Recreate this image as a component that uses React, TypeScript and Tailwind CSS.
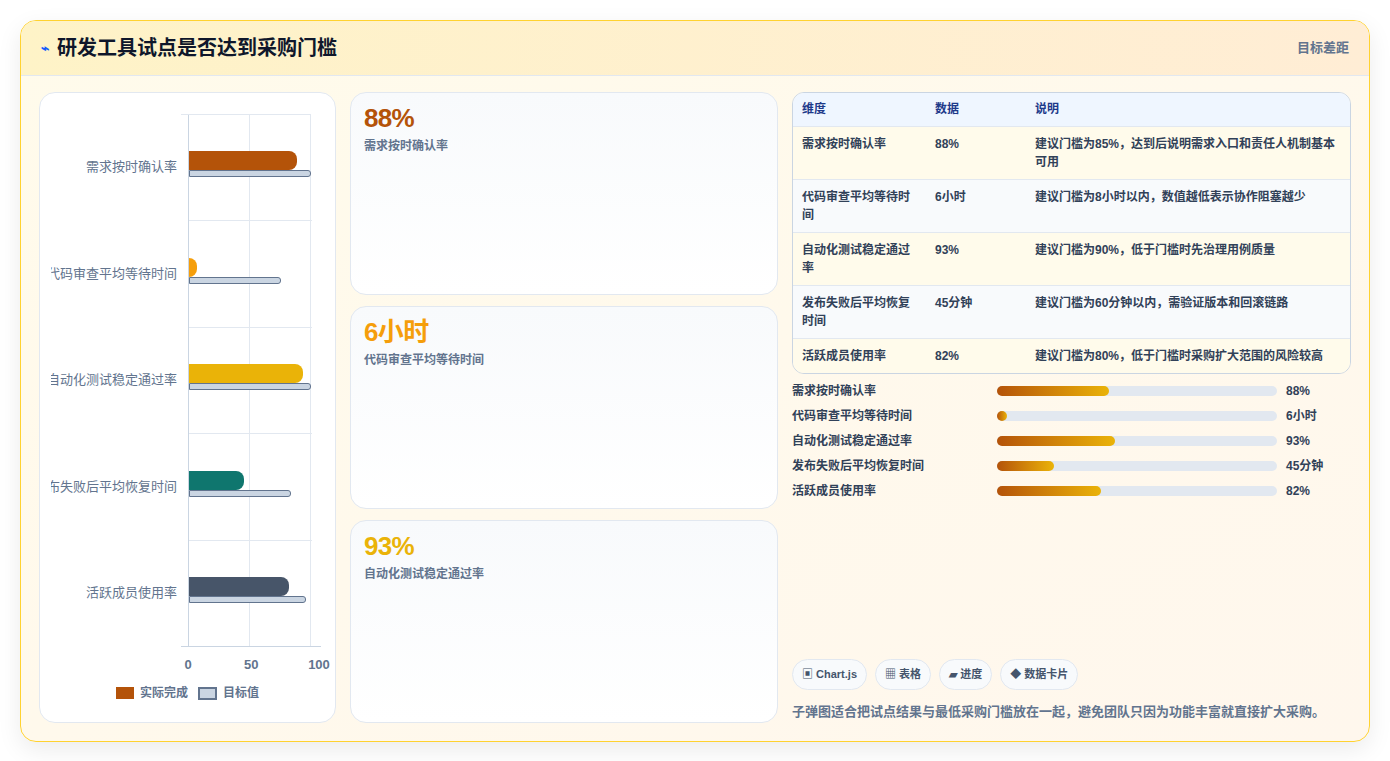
import React from 'react';

const rows = [
  { name: '需求按时确认率', value: '88%', actual: 108, target: 122, color: '#b45309', fill: 112, note: '建议门槛为85%，达到后说明需求入口和责任人机制基本可用' },
  { name: '代码审查平均等待时间', value: '6小时', actual: 8, target: 92, color: '#f59e0b', fill: 10, note: '建议门槛为8小时以内，数值越低表示协作阻塞越少' },
  { name: '自动化测试稳定通过率', value: '93%', actual: 114, target: 122, color: '#eab308', fill: 118, note: '建议门槛为90%，低于门槛时先治理用例质量' },
  { name: '发布失败后平均恢复时间', value: '45分钟', actual: 55, target: 102, color: '#0f766e', fill: 57, note: '建议门槛为60分钟以内，需验证版本和回滚链路' },
  { name: '活跃成员使用率', value: '82%', actual: 100, target: 117, color: '#475569', fill: 104, note: '建议门槛为80%，低于门槛时采购扩大范围的风险较高' },
];

const cards = [
  { value: '88%', label: '需求按时确认率', cls: 'text-[#b45309]' },
  { value: '6小时', label: '代码审查平均等待时间', cls: 'text-[#f59e0b]' },
  { value: '93%', label: '自动化测试稳定通过率', cls: 'text-[#eab308]' },
];

function Chart() {
  return (
    <div className="flex w-[297px] shrink-0 flex-col overflow-hidden rounded-2xl border border-slate-200 bg-white">
      <div className="flex flex-1 pt-[21px]">
        <div className="flex w-[148px] shrink-0 flex-col overflow-hidden pl-[11px]">
          {rows.map((r) => (
            <div key={r.name} className="flex h-[106.4px] items-center justify-end overflow-hidden whitespace-nowrap pr-[11px] text-[13px] text-slate-500">
              <span className="shrink-0">{r.name}</span>
            </div>
          ))}
        </div>
        <div className="relative w-[124px] border-l border-slate-300">
          <div className="pointer-events-none absolute inset-0">
            <div className="absolute left-[60px] top-0 bottom-0 w-px bg-slate-200" />
            <div className="absolute left-[121px] top-0 bottom-0 w-px bg-slate-200" />
            <div className="absolute left-[-8px] right-[2px] top-0 h-px bg-slate-200" />
          </div>
          {rows.map((r, i) => (
            <div key={r.name} className={`relative flex h-[106.4px] flex-col justify-center pb-[6px] ${i > 0 ? 'border-t border-slate-200' : ''}`}>
              <div className="h-[19px] rounded-r-[8px]" style={{ width: r.actual, background: r.color }} />
              <div className="h-[7px] rounded-r-[3px] border-[1.5px] border-slate-500 bg-slate-300" style={{ width: r.target }} />
            </div>
          ))}
        </div>
      </div>
      <div className="ml-[141px] flex w-[140px] justify-between border-t border-slate-300 pt-[8px] text-[13px] font-bold text-slate-500">
        <span className="w-[14px] text-center">0</span>
        <span className="w-[14px] text-center">50</span>
        <span className="-mr-[10px] w-[24px] text-center">100</span>
      </div>
      <div className="mb-[20px] mt-[10px] flex justify-center gap-[10px] text-[12px] font-bold text-slate-500">
        <span className="flex items-center gap-[6px]"><span className="h-[12px] w-[18px] bg-[#b45309]" />实际完成</span>
        <span className="flex items-center gap-[6px]"><span className="h-[13px] w-[19px] border-2 border-slate-500 bg-slate-300" />目标值</span>
      </div>
    </div>
  );
}

export default function App() {
  return (
    <div className="min-h-screen bg-white p-5 font-[Liberation_Sans,Noto_Sans_CJK_SC,sans-serif]">
      <div className="overflow-hidden rounded-2xl border border-amber-300 bg-gradient-to-br from-[#fffbeb] to-[#fff7ed] shadow-[0_8px_24px_rgba(0,0,0,0.08)]">
        <header className="flex h-[55px] items-center justify-between border-b border-slate-200 bg-gradient-to-r from-[#fef3c7] to-[#ffedd5] px-5">
          <h1 className="flex items-center gap-2 text-[20px] font-bold text-slate-900">
            <span className="text-[14px] text-blue-600">⌁</span>研发工具试点是否达到采购门槛
          </h1>
          <span className="text-[13px] font-bold text-slate-500">目标差距</span>
        </header>
        <div className="flex h-[665px] gap-[14px] px-[18px] pt-[16px] pb-[18px]">
          <Chart />
          <div className="flex w-[428px] shrink-0 flex-col gap-[11px]">
            {cards.map((c) => (
              <div key={c.label} className="flex-1 rounded-2xl border border-slate-200 bg-gradient-to-b from-[#f8fafc] to-white px-[13px] py-[9px]">
                <div className={`text-[26px] font-bold leading-[32px] tracking-tight ${c.cls}`}>{c.value}</div>
                <div className="mt-[3px] text-[12px] font-bold text-slate-500">{c.label}</div>
              </div>
            ))}
          </div>
          <div className="flex min-w-0 flex-1 flex-col">
            <div className="overflow-hidden rounded-xl border border-slate-300">
              <table className="w-full border-collapse text-left text-[12px] font-bold">
                <thead>
                  <tr className="bg-[#eff6ff] text-[#1e3a8a]">
                    <th className="h-[33px] w-[133px] px-[9px]">维度</th>
                    <th className="w-[100px] px-[9px]">数据</th>
                    <th className="px-[9px]">说明</th>
                  </tr>
                </thead>
                <tbody className="text-slate-700">
                  {rows.map((r, i) => (
                    <tr key={r.name} className={`border-t border-slate-200 align-top ${i % 2 === 0 ? 'bg-[#fffbeb]' : 'bg-[#f8fafc]'}`}>
                      <td className={`px-[9px] pt-[8px] leading-[18px] ${i === 4 ? 'pb-[8px]' : 'pb-[8px]'} ${i < 4 ? 'h-[53px]' : ''}`}>{r.name}</td>
                      <td className="px-[9px] pt-[8px] leading-[18px]">{r.value}</td>
                      <td className="px-[9px] pt-[8px] leading-[18px]">{r.note}</td>
                    </tr>
                  ))}
                </tbody>
              </table>
            </div>
            <div className="mt-[8px] flex flex-col gap-[7px]">
              {rows.map((r) => (
                <div key={r.name} className="flex h-[18px] items-center text-[12px] font-bold text-slate-700">
                  <span className="w-[205px]">{r.name}</span>
                  <div className="h-[10px] w-[280px] rounded-full bg-slate-200">
                    <div className="h-full rounded-full bg-gradient-to-r from-[#b45309] to-[#eab308]" style={{ width: r.fill }} />
                  </div>
                  <span className="ml-[9px]">{r.value}</span>
                </div>
              ))}
            </div>
            <div className="mt-auto flex gap-[8px]">
              {['▣ Chart.js', '▦ 表格', '▰ 进度', '◆ 数据卡片'].map((t) => (
                <span key={t} className="rounded-full border border-slate-200 bg-[#f8fafc] px-[9px] py-[6px] text-[11px] font-bold text-slate-600">{t}</span>
              ))}
            </div>
            <p className="mb-[2px] mt-[12px] text-[13px] font-bold text-slate-500">子弹图适合把试点结果与最低采购门槛放在一起，避免团队只因为功能丰富就直接扩大采购。</p>
          </div>
        </div>
      </div>
    </div>
  );
}
